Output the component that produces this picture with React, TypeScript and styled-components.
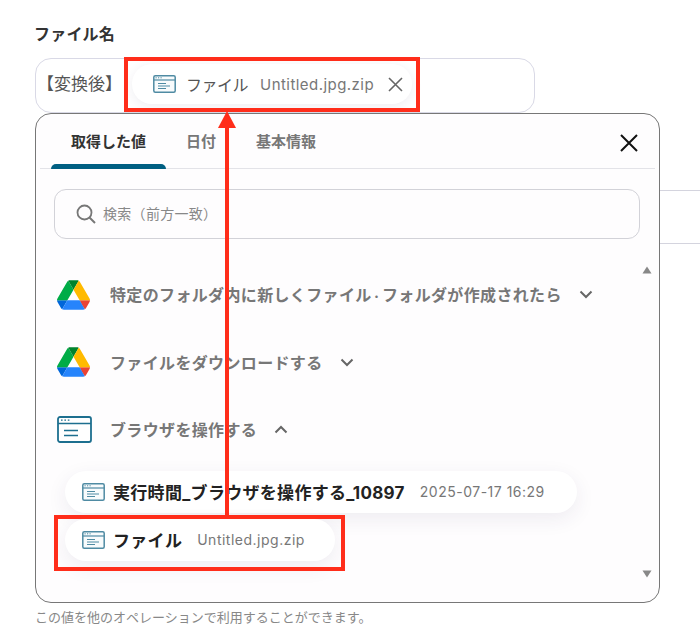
import React from "react";
import styled, { createGlobalStyle } from "styled-components";

const Global = createGlobalStyle`
  html, body { margin: 0; padding: 0; background: #fff; }
  body { font-family: Inter, "Noto Sans CJK JP", sans-serif; }
`;
const Page = styled.div`
  position: relative; width: 700px; height: 640px; overflow: hidden;
  padding: 24px 0 0 35px; box-sizing: border-box; display: flex; flex-direction: column;
`;
const Label = styled.div`font-size: 16px; line-height: 20px; font-weight: 700; color: #333; letter-spacing: .2px; margin-left: -1px;`;
const Field = styled.div`
  margin-top: 14px; width: 500px; height: 55px; box-sizing: border-box; flex: none;
  border: 1px solid #d9d9e6; border-radius: 16px; display: flex; align-items: center; padding-left: 1px;
`;
const Prefix = styled.span`font-size: 17px; color: #555; width: 95px; flex: none; margin-top: -6px; white-space: nowrap;`;
const Chip = styled.div`
  display: flex; align-items: center; height: 40px; width: 280px; border-radius: 20px; background: #fff;
  box-shadow: 0 3px 12px rgba(50,40,90,.08); padding-left: 21px; box-sizing: border-box; margin-top: -3px;
`;
const ChipName = styled.span`font-size: 16px; color: #555; margin-left: 10px; letter-spacing: -.5px;`;
const ChipValue = styled.span`font-size: 15px; color: #777; margin-left: 12px; letter-spacing: .45px;`;
const ChipClose = styled.svg`margin-left: 14px; flex: none;`;
const Ghost = styled.div`
  flex: none; margin-top: 77px; height: 54px; box-sizing: border-box;
  border-top: 1px solid #d4d4de; border-bottom: 1px solid #d4d4de;
`;
const Hint = styled.div`margin-top: 363px; font-size: 13px; line-height: 20px; color: #888;`;
const Popover = styled.div`
  position: absolute; left: 35px; top: 113px; width: 625px; height: 490px; box-sizing: border-box;
  border: 1px solid #777; border-radius: 16px; background: #fefdfe; display: flex; flex-direction: column;
`;
const TabBar = styled.div`
  flex: none; height: 55px; margin: 0 4px; padding-left: 11px; border-bottom: 1px solid #e3e3e8;
  display: flex; align-items: stretch; box-sizing: border-box;
`;
const Tab = styled.div<{ $active?: boolean }>`
  position: relative; padding: 0 20px 0; line-height: 55px; font-size: 15px; font-weight: 700;
  color: ${p => (p.$active ? "#333" : "#777")};
  &::after {
    content: ""; display: ${p => (p.$active ? "block" : "none")}; position: absolute; left: 0; right: 0; bottom: -1px;
    height: 5px; background: #005f82; border-radius: 5px 5px 0 0;
  }
`;
const CloseBtn = styled.svg`margin: 20px 17px 0 auto; flex: none;`;
const Search = styled.div`
  flex: none; margin: 20px 19px 0 18px; height: 50px; box-sizing: border-box; border: 1px solid #d2d2d8; border-radius: 12px;
  display: flex; align-items: center; padding-left: 21px; gap: 7px;
`;
const Placeholder = styled.span`font-size: 14px; color: #888; letter-spacing: .3px; margin-top: -3px;`;
const Body = styled.div`flex: 1; display: flex; min-height: 0; margin-top: 22px;`;
const List = styled.div`flex: 1; display: flex; flex-direction: column; padding-left: 21px;`;
const Row = styled.div`display: flex; align-items: center; height: 67.5px; flex: none;`;
const IconSlot = styled.div`width: 53px; flex: none; display: flex; align-items: center;`;
const RowTitle = styled.span`font-size: 16px; font-weight: 700; color: #777; letter-spacing: .35px; margin-top: -1px;`;
const Dot = styled.span`font-size: 10px;`;
const Chevron = styled.svg`margin-left: 17px; flex: none;`;
const Pills = styled.div`display: flex; flex-direction: column; gap: 6px; margin: 7px 0 0 8px; align-items: flex-start;`;
const Pill = styled.div<{ $width: number }>`
  width: ${p => p.$width}px; height: 42px; box-sizing: border-box; border-radius: 21px; background: #fff;
  box-shadow: 0 6px 20px rgba(50,40,90,.08); display: flex; align-items: center; padding-left: 17px;
`;
const PillName = styled.span`font-size: 17px; font-weight: 700; color: #222; margin: -1px 0 0 8px; letter-spacing: .3px; white-space: nowrap;`;
const PillValue = styled.span<{ $gap: number }>`font-size: 14px; color: #777; margin: -1px 0 0 ${p => p.$gap}px; letter-spacing: .5px; white-space: nowrap;`;
const Scrollbar = styled.div`
  width: 16px; margin-right: 4px; height: 320px; flex: none; display: flex; flex-direction: column;
  justify-content: space-between; align-items: center; padding: 5px 0 3px; box-sizing: border-box;
`;
const Mark = styled.div<{ $left: number; $top: number; $w: number; $h: number }>`
  position: absolute; left: ${p => p.$left}px; top: ${p => p.$top}px; width: ${p => p.$w}px; height: ${p => p.$h}px;
  border: 4px solid #ff2d1a; box-sizing: border-box; pointer-events: none;
`;
const Arrow = styled.svg`position: absolute; left: 215px; top: 108px; pointer-events: none;`;

const BrowserLarge = () => (
  <svg width="35" height="27" viewBox="0 0 35 27" fill="none">
    <rect x="1" y="1" width="33" height="25" rx="2" stroke="#1d6f8f" strokeWidth="1.8" fill="#fff" />
    <path d="M1 7.5H34" stroke="#1d6f8f" strokeWidth="1.4" />
    <path d="M4 4.2h1.6M7.4 4.2H9M10.8 4.2h1.6" stroke="#1d6f8f" strokeWidth="1.3" />
    <path d="M7 14.5h14M7 19.5h14" stroke="#1d6f8f" strokeWidth="1.6" />
  </svg>
);
const BrowserSmall = () => (
  <svg width="23" height="18" viewBox="0 0 23 18" fill="none">
    <rect x=".8" y=".8" width="21.4" height="16.4" rx="1.5" stroke="#4f8ba3" strokeWidth="1.5" fill="#f8fbfc" />
    <path d="M.8 5H22.2" stroke="#4f8ba3" strokeWidth="1.2" />
    <path d="M2.5 2.8h1.2M5 2.8h1.2M7.5 2.8h1.2" stroke="#4f8ba3" strokeWidth="1" />
    <path d="M5 8.5h8M5 11h12M5 13.5h8" stroke="#4f8ba3" strokeWidth="1.1" />
  </svg>
);
const Drive = () => (
  <svg width="33" height="30" viewBox="0 0 87.3 78">
    <path d="m6.6 66.85 3.85 6.65c.8 1.4 1.95 2.5 3.3 3.3l13.75-23.8h-27.5c0 1.55.4 3.1 1.2 4.5z" fill="#0066da" />
    <path d="m43.65 25-13.75-23.8c-1.35.8-2.5 1.9-3.3 3.3l-25.4 44a9.06 9.06 0 0 0 -1.2 4.5h27.5z" fill="#00ac47" />
    <path d="m73.55 76.8c1.35-.8 2.5-1.9 3.3-3.3l1.6-2.75 7.65-13.25c.8-1.4 1.2-2.95 1.2-4.5h-27.502l5.852 11.5z" fill="#ea4335" />
    <path d="m43.65 25 13.75-23.8c-1.35-.8-2.9-1.2-4.5-1.2h-18.5c-1.6 0-3.15.45-4.5 1.2z" fill="#00832d" />
    <path d="m59.8 53h-32.3l-13.75 23.8c1.35.8 2.9 1.2 4.5 1.2h50.8c1.6 0 3.15-.45 4.5-1.2z" fill="#2684fc" />
    <path d="m73.4 26.5-12.7-22c-.8-1.4-1.95-2.5-3.3-3.3l-13.75 23.8 16.15 28h27.45c0-1.55-.4-3.1-1.2-4.5z" fill="#ffba00" />
  </svg>
);
const Down = () => (
  <Chevron width="14" height="9" viewBox="0 0 14 9" fill="none">
    <path d="M1.5 1.5 7 7l5.5-5.5" stroke="#666" strokeWidth="2" />
  </Chevron>
);
const Up = () => (
  <Chevron width="14" height="9" viewBox="0 0 14 9" fill="none">
    <path d="M1.5 7.5 7 2l5.5 5.5" stroke="#666" strokeWidth="2" />
  </Chevron>
);
const Tri = ({ up }: { up?: boolean }) => (
  <svg width="10" height="8" viewBox="0 0 10 8">
    <path d={up ? "M5 0.5 9.5 7.5H.5z" : "M.5.5h9L5 7.5z"} fill="#888" />
  </svg>
);

export default function App() {
  return (
    <Page>
      <Global />
      <Label>ファイル名</Label>
      <Field>
        <Prefix>【変換後】</Prefix>
        <Chip>
          <BrowserSmall />
          <ChipName>ファイル</ChipName>
          <ChipValue>Untitled.jpg.zip</ChipValue>
          <ChipClose width="15" height="15" viewBox="0 0 15 15" fill="none">
            <path d="M1 1l13 13M14 1 1 14" stroke="#666" strokeWidth="1.6" />
          </ChipClose>
        </Chip>
      </Field>
      <Ghost />
      <Hint>この値を他のオペレーションで利用することができます。</Hint>
      <Popover>
        <TabBar>
          <Tab $active>取得した値</Tab>
          <Tab>日付</Tab>
          <Tab>基本情報</Tab>
          <CloseBtn width="18" height="18" viewBox="0 0 18 18" fill="none">
            <path d="M1 1l16 16M17 1 1 17" stroke="#111" strokeWidth="2" />
          </CloseBtn>
        </TabBar>
        <Search>
          <svg width="20" height="20" viewBox="0 0 20 20" fill="none">
            <circle cx="8.5" cy="8.5" r="7" stroke="#777" strokeWidth="1.8" />
            <path d="M13.5 13.5 19 19" stroke="#777" strokeWidth="2" />
          </svg>
          <Placeholder>検索（前方一致）</Placeholder>
        </Search>
        <Body>
          <List>
            <Row>
              <IconSlot><Drive /></IconSlot>
              <RowTitle>特定のフォルダ内に新しくファイル<Dot>・</Dot>フォルダが作成されたら</RowTitle>
              <Down />
            </Row>
            <Row>
              <IconSlot><Drive /></IconSlot>
              <RowTitle>ファイルをダウンロードする</RowTitle>
              <Down />
            </Row>
            <Row>
              <IconSlot><BrowserLarge /></IconSlot>
              <RowTitle>ブラウザを操作する</RowTitle>
              <Up />
            </Row>
            <Pills>
              <Pill $width={512}>
                <BrowserSmall />
                <PillName>実行時間_ブラウザを操作する_10897</PillName>
                <PillValue $gap={15}>2025-07-17 16:29</PillValue>
              </Pill>
              <Pill $width={270}>
                <BrowserSmall />
                <PillName>ファイル</PillName>
                <PillValue $gap={15}>Untitled.jpg.zip</PillValue>
              </Pill>
            </Pills>
          </List>
          <Scrollbar>
            <Tri up />
            <Tri />
          </Scrollbar>
        </Body>
      </Popover>
      <Mark $left={124} $top={57} $w={296} $h={55} />
      <Mark $left={54} $top={515} $w={291} $h={56} />
      <Arrow width="24" height="410" viewBox="0 0 24 410">
        <path d="M12 18V408" stroke="#ff2d1a" strokeWidth="4" />
        <path d="M12 3 21 20H3z" fill="#ff2d1a" />
      </Arrow>
    </Page>
  );
}
